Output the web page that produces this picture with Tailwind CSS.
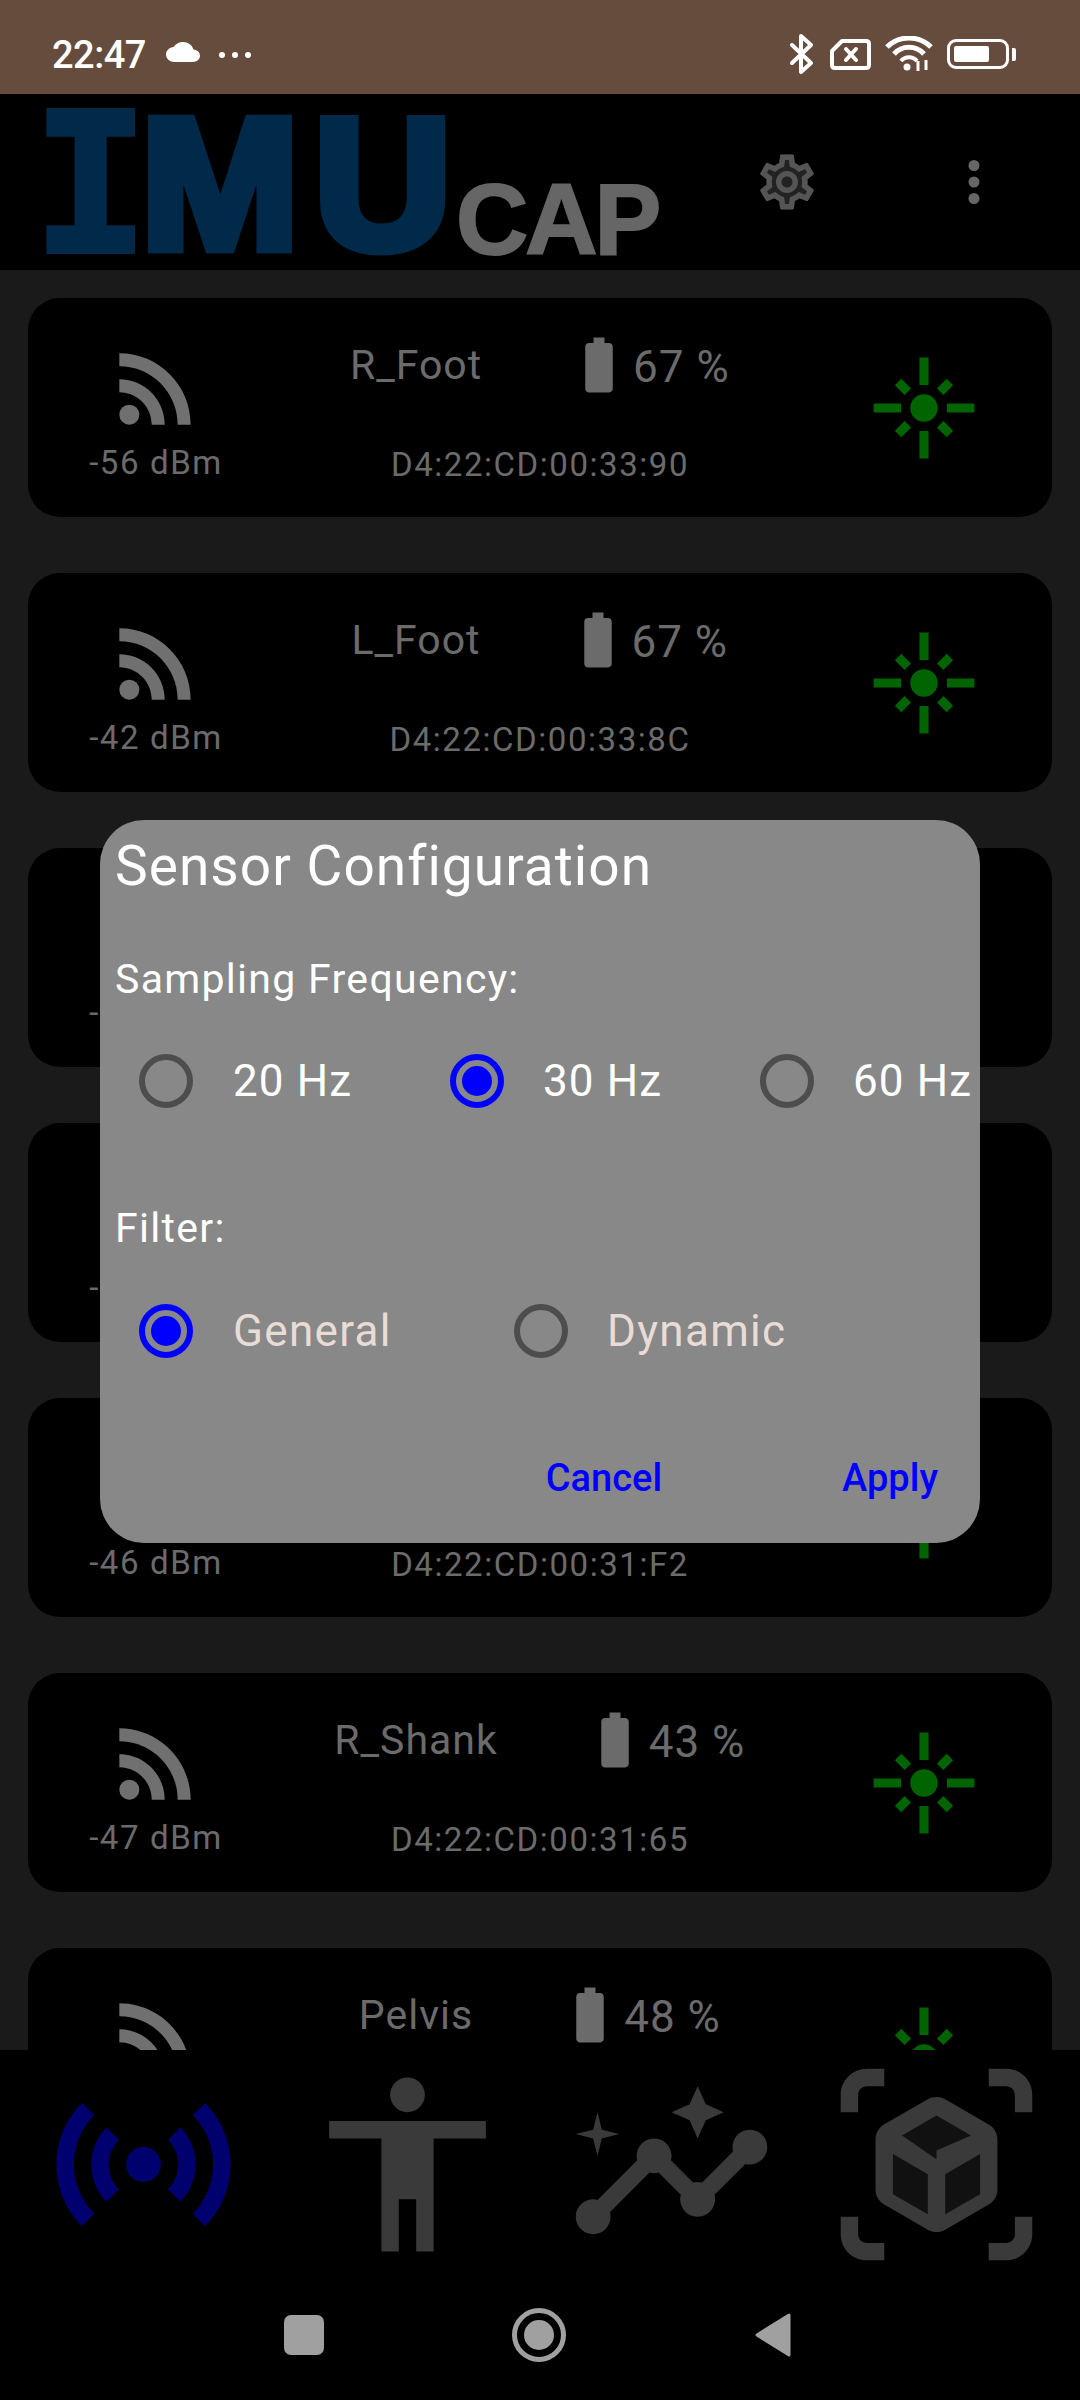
<!DOCTYPE html>
<html lang="en">
<head>
    <meta charset="UTF-8">
    <meta name="viewport" content="width=device-width, initial-scale=1.0">
    <title>IMUcap</title>
    <script src="https://cdn.jsdelivr.net/npm/@tailwindcss/browser@4"></script>
</head>
<body class="bg-black">
    <div class="relative w-[1080px] h-[2400px] flex flex-col overflow-hidden bg-black [font-family:Roboto,sans-serif]">

        <!-- status bar -->
        <div class="h-[94px] bg-[#664c3c] flex items-center justify-between text-white shrink-0">
            <div class="flex items-center pl-[52px] pt-[16px]">
                <span class="text-[38px] font-medium leading-none tracking-[-0.5px]">22:47</span>
                <svg class="ml-[20px] w-[34px] h-[20px] -mt-[6px]" viewBox="0 4 24 16" preserveAspectRatio="none" fill="#fff"><path d="M19.35 10.04C18.67 6.59 15.64 4 12 4 9.11 4 6.6 5.64 5.35 8.04 2.34 8.36 0 10.91 0 14c0 3.31 2.69 6 6 6h13c2.76 0 5-2.24 5-5 0-2.64-2.05-4.78-4.65-4.96z"/></svg>
                <div class="ml-[19px] flex gap-[7px]">
                    <span class="w-[6px] h-[6px] rounded-full bg-white"></span>
                    <span class="w-[6px] h-[6px] rounded-full bg-white"></span>
                    <span class="w-[6px] h-[6px] rounded-full bg-white"></span>
                </div>
            </div>
            <div class="flex items-center pr-[64px] pt-[14px]">
                <svg class="w-[26px] h-[42px]" viewBox="0 0 26 42" fill="none" stroke="#fff" stroke-width="4" stroke-linejoin="round" stroke-linecap="round"><path d="M3 12 L22 30 L12 39 V3 L22 12 L3 30"/></svg>
                <svg class="ml-[15px] w-[41px] h-[31px]" viewBox="0 0 41 31" fill="none" stroke="#fff" stroke-width="4" stroke-linejoin="round"><path d="M12 2 H36 Q39 2 39 5 V26 Q39 29 36 29 H5 Q2 29 2 26 V12 Z"/><path d="M16 10 L26 21 M26 10 L16 21" stroke-linecap="round"/></svg>
                <svg class="ml-[14px] w-[48px] h-[36px]" viewBox="0 0 48 36" fill="none" stroke="#fff" stroke-width="5"><path d="M2 11 C14 -1 34 -1 46 11"/><path d="M9 18 C17 9 31 9 39 18"/><path d="M16 25 C20 20 28 20 32 25" stroke-width="4"/><circle cx="22" cy="31" r="3.5" fill="#fff" stroke="none"/><path d="M33 25 V35 M41 24 V34" stroke-width="3"/></svg>
                <div class="ml-[14px] w-[62px] h-[30px] rounded-[9px] border-[3px] border-white p-[4px]">
                    <div class="w-[35px] h-full rounded-[2px] bg-white"></div>
                </div>
                <div class="ml-[3px] w-[4px] h-[13px] rounded-r-[2px] bg-white"></div>
            </div>
        </div>

        <!-- app bar -->
        <div class="h-[176px] bg-black flex items-center shrink-0">
            <div class="w-[740px] h-full pl-[47px] pt-[13px] flex items-start whitespace-nowrap">
                <span class="[font-family:'DejaVu_Sans_Mono',monospace] font-bold text-[195px] leading-[150px] text-[#012a4a] [-webkit-text-stroke:4px_#012a4a] w-[90px] -ml-[15px] mt-[3px]">I</span>
                <span class="[font-family:'Liberation_Sans',sans-serif] font-bold text-[186px] leading-[150px] text-[#012a4a] tracking-[15px] [-webkit-text-stroke:11px_#012a4a] scale-x-[1.02] origin-left ml-[19px] mt-[2px] w-[310px]">MU</span>
                <span class="[font-family:'Liberation_Sans',sans-serif] font-bold text-[100px] leading-[100px] text-[#666666] tracking-[-3px] [-webkit-text-stroke:2px_#666666] mt-[62px] ml-[5px]">CAP</span>
            </div>
            <svg class="ml-[14px] w-[66px] h-[66px]" viewBox="0 0 24 24">
                <path fill="#222" d="M19.43 12.98c.04-.32.07-.64.07-.98 0-.34-.03-.66-.07-.98l2.11-1.65c.19-.15.24-.42.12-.64l-2-3.46c-.12-.22-.39-.3-.61-.22l-2.49 1c-.52-.4-1.08-.73-1.69-.98l-.38-2.65C14.46 2.18 14.25 2 14 2h-4c-.25 0-.46.18-.49.42l-.38 2.65c-.61.25-1.17.59-1.69.98l-2.49-1c-.23-.09-.49 0-.61.22l-2 3.46c-.13.22-.07.49.12.64l2.11 1.65c-.04.32-.07.65-.07.98 0 .33.03.66.07.98l-2.11 1.65c-.19.15-.24.42-.12.64l2 3.46c.12.22.39.3.61.22l2.49-1c.52.4 1.08.73 1.69.98l.38 2.65c.03.24.24.42.49.42h4c.25 0 .46-.18.49-.42l.38-2.65c.61-.25 1.17-.59 1.69-.98l2.49 1c.23.09.49 0 .61-.22l2-3.46c.12-.22.07-.49-.12-.64l-2.11-1.65z"/>
                <path fill="#555" d="M19.43 12.98c.04-.32.07-.64.07-.98 0-.34-.03-.66-.07-.98l2.11-1.65c.19-.15.24-.42.12-.64l-2-3.46c-.09-.16-.26-.25-.44-.25-.06 0-.12.01-.17.03l-2.49 1c-.52-.4-1.08-.73-1.69-.98l-.38-2.65C14.46 2.18 14.25 2 14 2h-4c-.25 0-.46.18-.49.42l-.38 2.65c-.61.25-1.17.59-1.69.98l-2.49-1c-.06-.02-.12-.03-.18-.03-.17 0-.34.09-.43.25l-2 3.46c-.13.22-.07.49.12.64l2.11 1.65c-.04.32-.07.65-.07.98 0 .33.03.66.07.98l-2.11 1.65c-.19.15-.24.42-.12.64l2 3.46c.09.16.26.25.44.25.06 0 .12-.01.17-.03l2.49-1c.52.4 1.08.73 1.69.98l.38 2.65c.03.24.24.42.49.42h4c.25 0 .46-.18.49-.42l.38-2.65c.61-.25 1.17-.59 1.69-.98l2.49 1c.06.02.12.03.18.03.17 0 .34-.09.43-.25l2-3.46c.12-.22.07-.49-.12-.64l-2.11-1.65zm-1.98-1.71c.04.31.05.52.05.73 0 .21-.02.43-.05.73l-.14 1.13.89.7 1.08.84-.7 1.21-1.27-.51-1.04-.42-.9.68c-.43.32-.84.56-1.25.73l-1.06.43-.16 1.13-.2 1.35h-1.4l-.19-1.35-.16-1.13-1.06-.43c-.43-.18-.83-.41-1.23-.71l-.91-.7-1.06.43-1.27.51-.7-1.21 1.08-.84.89-.7-.14-1.13c-.03-.31-.05-.54-.05-.74s.02-.43.05-.73l.14-1.13-.89-.7-1.08-.84.7-1.21 1.27.51 1.04.42.9-.68c.43-.32.84-.56 1.25-.73l1.06-.43.16-1.13.2-1.35h1.39l.19 1.35.16 1.13 1.06.43c.43.18.83.41 1.23.71l.91.7 1.06-.43 1.27-.51.7 1.21-1.07.85-.89.7.14 1.13zM12 8c-2.21 0-4 1.79-4 4s1.79 4 4 4 4-1.79 4-4-1.79-4-4-4zm0 6c-1.1 0-2-.9-2-2s.9-2 2-2 2 .9 2 2-.9 2-2 2z"/>
            </svg>
            <svg class="ml-[121px] w-[66px] h-[66px]" viewBox="0 0 24 24" fill="#666"><circle cx="12" cy="6" r="2"/><circle cx="12" cy="12" r="2"/><circle cx="12" cy="18" r="2"/></svg>
        </div>

        <!-- sensor list -->
        <div id="sensor-list" class="flex-1 min-h-0 overflow-hidden bg-[#1a1a1a] px-[28px] pt-[28px] flex flex-col gap-[56px]"></div>

        <!-- bottom tabs -->
        <div class="h-[350px] bg-black shrink-0">
            <div class="flex h-[230px] pt-[10px]">
                <svg class="ml-[39px] w-[209px] h-[209px]" viewBox="0 0 24 24" fill="#00006e"><path d="M7.76 16.24C6.67 15.16 6 13.66 6 12s.67-3.16 1.76-4.24l1.42 1.42C8.45 9.9 8 10.9 8 12c0 1.1.45 2.1 1.17 2.83l-1.41 1.41zm8.48 0C17.33 15.16 18 13.66 18 12s-.67-3.16-1.76-4.24l-1.42 1.42C15.55 9.9 16 10.9 16 12c0 1.1-.45 2.1-1.17 2.83l1.41 1.41zM12 10c-1.1 0-2 .9-2 2s.9 2 2 2 2-.9 2-2-.9-2-2-2zm8 2c0 2.21-.9 4.21-2.35 5.65l1.42 1.42C20.88 17.26 22 14.76 22 12s-1.12-5.26-2.93-7.07l-1.42 1.42C19.1 7.79 20 9.79 20 12zM6.35 6.35L4.93 4.93C3.12 6.74 2 9.24 2 12s1.12 5.26 2.93 7.07l1.42-1.42C4.9 16.21 4 14.21 4 12s.9-4.21 2.35-5.65z"/></svg>
                <svg class="ml-[55px] w-[209px] h-[209px]" viewBox="0 0 24 24" fill="#3a3a3a"><path d="M12 2c1.1 0 2 .9 2 2s-.9 2-2 2-2-.9-2-2 .9-2 2-2zm9 7h-6v13h-2v-6h-2v6H9V9H3V7h18v2z"/></svg>
                <svg class="ml-[55px] w-[209px] h-[209px]" viewBox="0 0 24 24" fill="#3a3a3a"><path d="M21 8c-1.45 0-2.26 1.44-1.93 2.51l-3.55 3.56c-.3-.09-.74-.09-1.04 0l-2.55-2.55C12.27 10.45 11.46 9 10 9c-1.45 0-2.27 1.44-1.93 2.52l-4.56 4.55C2.44 15.74 1 16.55 1 18c0 1.1.9 2 2 2 1.45 0 2.26-1.44 1.93-2.51l4.55-4.56c.3.09.74.09 1.04 0l2.55 2.55C12.73 16.55 13.54 18 15 18c1.45 0 2.27-1.44 1.93-2.52l3.56-3.55c1.07.33 2.51-.48 2.51-1.93 0-1.1-.9-2-2-2z"/><path d="M15 9l.94-2.07L18 6l-2.06-.93L15 3l-.92 2.07L12 6l2.08.93z"/><path d="M3.5 11L4 9l2-.5L4 8l-.5-2L3 8l-2 .5L3 9z"/></svg>
                <svg class="ml-[56px] w-[209px] h-[209px]" viewBox="0 0 24 24"><path fill="#111" d="M12 5l6.3 3.6v6.8L12 19l-6.3-3.6V8.6z"/><path fill="#3a3a3a" d="M3 4c0-.55.45-1 1-1h2V1H4C2.34 1 1 2.34 1 4v2h2V4zm0 16v-2H1v2c0 1.66 1.34 3 3 3h2v-2H4c-.55 0-1-.45-1-1zM20 1h-2v2h2c.55 0 1 .45 1 1v2h2V4c0-1.66-1.34-3-3-3zm1 19c0 .55-.45 1-1 1h-2v2h2c1.66 0 3-1.34 3-3v-2h-2v2zm-2-5.13V9.13c0-.72-.38-1.38-1-1.73l-5-2.88c-.31-.18-.65-.27-1-.27s-.69.09-1 .27L6 7.39c-.62.36-1 1.02-1 1.74v5.74c0 .72.38 1.38 1 1.73l5 2.88c.31.18.65.27 1 .27s.69-.09 1-.27l5-2.88c.62-.35 1-1.01 1-1.73zm-8 2.85l-4-2.3v-4.63l4 2.33v4.6zm1-6.33L8.04 8.66 12 6.38l3.96 2.28L12 10.39zm5 4.03l-4 2.3v-4.6l4-2.33v4.63z"/></svg>
            </div>
            <!-- android nav -->
            <div class="flex items-center h-[90px] pt-[20px]">
                <div class="ml-[284px] w-[40px] h-[40px] rounded-[7px] bg-[#a0a0a0]"></div>
                <div class="ml-[188px] w-[54px] h-[54px] rounded-full border-[5px] border-[#a0a0a0] flex items-center justify-center">
                    <div class="w-[30px] h-[30px] rounded-full bg-[#a0a0a0]"></div>
                </div>
                <svg class="ml-[188px] w-[38px] h-[46px]" viewBox="0 0 38 46" fill="#a0a0a0" stroke="#a0a0a0" stroke-width="3" stroke-linejoin="round"><path d="M35 3 V43 L3 23 Z"/></svg>
            </div>
        </div>

        <!-- dialog over the list -->
        <div class="absolute left-[100px] top-[820px] w-[880px] h-[723px] rounded-[44px] bg-[#888888] text-white pl-[15px] flex flex-col">
            <h2 class="text-[55px] leading-[64px] tracking-[1.05px] mt-[14px]">Sensor Configuration</h2>
            <p class="text-[41px] leading-[48px] tracking-[1.3px] mt-[57px]">Sampling Frequency:</p>

            <div class="flex items-center h-[60px] mt-[48px] -ml-[15px] text-[44px] tracking-[1.1px] whitespace-nowrap">
                <span class="ml-[39px] w-[54px] h-[54px] rounded-full border-[6px] border-[#4d4d4d]"></span>
                <span class="ml-[40px] w-[217px]">20 Hz</span>
                <span class="w-[54px] h-[54px] rounded-full border-[6px] border-[#0000ff] flex items-center justify-center"><span class="w-[30px] h-[30px] rounded-full bg-[#0000ff]"></span></span>
                <span class="ml-[39px] w-[217px]">30 Hz</span>
                <span class="w-[54px] h-[54px] rounded-full border-[6px] border-[#4d4d4d]"></span>
                <span class="ml-[39px]">60 Hz</span>
            </div>

            <p class="text-[41px] leading-[48px] tracking-[1.3px] mt-[93px]">Filter:</p>

            <div class="flex items-center h-[60px] mt-[49px] -ml-[15px] text-[44px] tracking-[1.3px] text-[#e8dcd6]">
                <span class="ml-[39px] w-[54px] h-[54px] rounded-full border-[6px] border-[#0000ff] flex items-center justify-center"><span class="w-[30px] h-[30px] rounded-full bg-[#0000ff]"></span></span>
                <span class="ml-[40px] w-[281px]">General</span>
                <span class="w-[54px] h-[54px] rounded-full border-[6px] border-[#4d4d4d]"></span>
                <span class="ml-[39px]">Dynamic</span>
            </div>

            <div class="flex justify-end mt-[93px] pr-[42px] text-[38px] leading-[48px] font-medium text-[#0000ff]">
                <span>Cancel</span>
                <span class="ml-[180px]">Apply</span>
            </div>
        </div>
    </div>

    <script>
        const sensors = [
            { name: 'R_Foot', battery: 67, rssi: -56, mac: 'D4:22:CD:00:33:90' },
            { name: 'L_Foot', battery: 67, rssi: -42, mac: 'D4:22:CD:00:33:8C' },
            { name: 'R_Thigh', battery: 52, rssi: -48, mac: 'D4:22:CD:00:31:A0' },
            { name: 'L_Thigh', battery: 55, rssi: -44, mac: 'D4:22:CD:00:31:A4' },
            { name: 'L_Shank', battery: 45, rssi: -46, mac: 'D4:22:CD:00:31:F2' },
            { name: 'R_Shank', battery: 43, rssi: -47, mac: 'D4:22:CD:00:31:65' },
            { name: 'Pelvis', battery: 48, rssi: -50, mac: 'D4:22:CD:00:31:70' },
        ];

        document.getElementById('sensor-list').innerHTML = sensors.map(sensor => `
            <div class="h-[219px] shrink-0 rounded-[32px] bg-black flex text-[#6b6b6b]">
                <div class="w-[254px] pt-[35px] pl-[2px] flex flex-col items-center">
                    <svg class="w-[110px] h-[110px]" viewBox="0 0 24 24" fill="#707070"><circle cx="6.18" cy="17.82" r="2.18"/><path d="M4 4.44v2.83c7.03 0 12.73 5.7 12.73 12.73h2.83c0-8.59-6.97-15.56-15.56-15.56zm0 5.66v2.83c3.9 0 7.07 3.17 7.07 7.07h2.83c0-5.47-4.43-9.9-9.9-9.9z"/></svg>
                    <span class="text-[33px] leading-[39px] tracking-[1.6px]">${sensor.rssi} dBm</span>
                </div>
                <div class="w-[516px] pt-[34px]">
                    <div class="w-[268px] h-[66px] grid grid-cols-[minmax(0,1fr)_auto_minmax(0,1fr)] items-center whitespace-nowrap">
                        <span></span>
                        <span class="text-[41px] leading-[48px] tracking-[1px]">${sensor.name}</span>
                        <span class="flex items-center pl-[84px]">
                            <svg class="shrink-0 w-[66px] h-[66px]" viewBox="0 0 24 24" fill="#6b6b6b"><path d="M15.67 4H14V2h-4v2H8.33C7.6 4 7 4.6 7 5.33v15.33C7 21.4 7.6 22 8.33 22h7.33c.74 0 1.34-.6 1.34-1.33V5.33C17 4.6 16.4 4 15.67 4z"/></svg>
                            <span class="ml-[1px] mt-[3px] text-[44px] leading-[48px] tracking-[1px]">${sensor.battery} %</span>
                        </span>
                    </div>
                    <p class="mt-[47px] text-center text-[33px] leading-[40px] tracking-[1.55px]">${sensor.mac}</p>
                </div>
                <div class="flex-1 pt-[55px] pr-[2px] flex justify-center">
                    <svg class="w-[110px] h-[110px]" viewBox="0 0 24 24" fill="#006400"><path d="M7 11H1v2h6v-2zm2.17-3.24L7.05 5.64 5.64 7.05l2.12 2.12 1.41-1.41zM13 1h-2v6h2V1zm5.36 6.05l-1.41-1.41-2.12 2.12 1.41 1.41 2.12-2.12zM17 11v2h6v-2h-6zm-5-2c-1.66 0-3 1.34-3 3s1.34 3 3 3 3-1.34 3-3-1.34-3-3-3zm2.83 7.24l2.12 2.12 1.41-1.41-2.12-2.12-1.41 1.41zm-9.19.71l1.41 1.41 2.12-2.12-1.41-1.41-2.12 2.12zM11 23h2v-6h-2v6z"/></svg>
                </div>
            </div>
        `).join('');
    </script>
</body>
</html>
